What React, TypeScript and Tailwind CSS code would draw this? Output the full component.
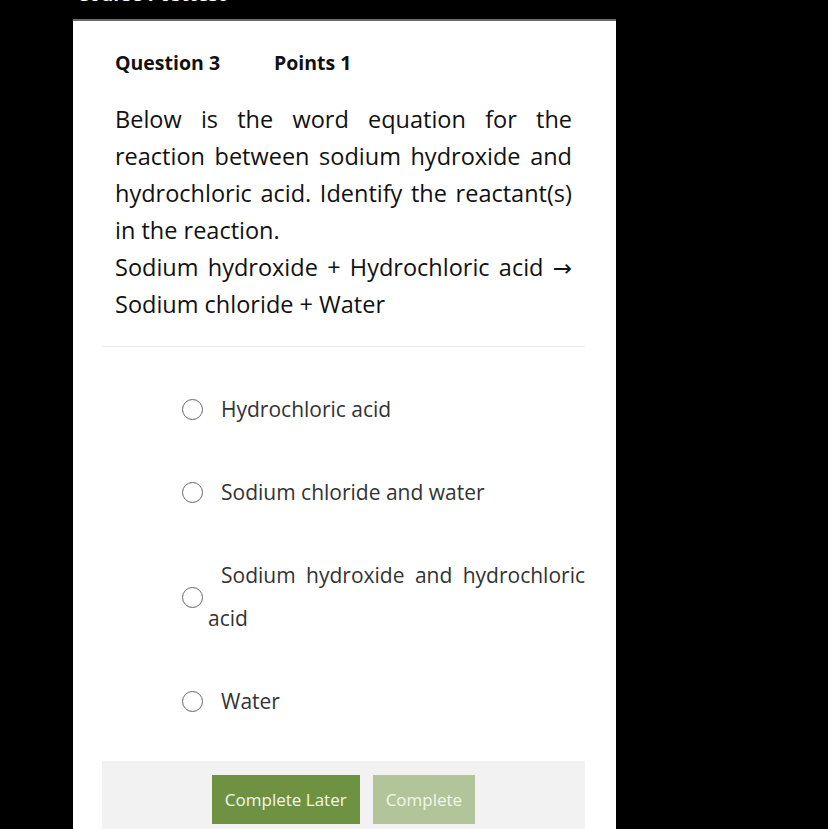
const options = [
  'Hydrochloric acid',
  'Sodium chloride and water',
  'Sodium hydroxide and hydrochloric acid',
  'Water',
];

export default function App() {
  return (
    <div className="min-h-[829px] bg-black" style={{ fontFamily: '"Open Sans", sans-serif' }}>
      <div className="ml-[73px] w-[543px] min-h-[829px] bg-white">
        <div className="h-[21px] overflow-hidden border-b-2 border-[#6b6b6b] bg-black">
          <div className="-mt-[19px] pl-[4px] text-[19px] leading-[26px] font-bold text-white">Course Posttest</div>
        </div>

        <div className="ml-[29px] mr-[31px]">
          <div className="flex px-[13px] pt-[29px] text-[19.5px] leading-[26px] font-bold text-[#111]">
            <span className="w-[159px]">Question 3</span>
            <span>Points 1</span>
          </div>

          <div className="px-[13px] pt-[25px] pb-[23px] text-[23.5px] leading-[37px] text-[#111] text-justify">
            <p>
              Below is the word equation for the reaction between sodium hydroxide and hydrochloric acid.
              Identify the reactant(s) in the reaction.
            </p>
            <p>
              Sodium hydroxide + Hydrochloric acid{' '}
              <span className="font-['DejaVu_Sans',sans-serif] text-[23px] leading-none">→</span> Sodium chloride + Water
            </p>
          </div>

          <div className="border-t border-[#ececec] pt-[21px] pl-[80px] pb-[18px]">
            {options.map((o) => (
              <label key={o} className="flex items-center py-[20px] cursor-pointer">
                <span className="w-[21px] h-[21px] shrink-0 rounded-full border-[1.5px] border-[#666] bg-white" />
                <span className="ml-[5px] flex-1 text-[21px] leading-[43px] text-[#333] text-justify indent-[13px]">{o}</span>
              </label>
            ))}
          </div>

          <div className="flex justify-center gap-[13px] bg-[#f2f2f2] pt-[14px] pb-[10px]">
            <button className="h-[49px] px-[13px] bg-[#6e9242] text-[17px] text-[#f2f7e8]">Complete Later</button>
            <button className="h-[49px] px-[13px] bg-[#b2c49a] text-[17px] text-[#f2f7e8]">Complete</button>
          </div>
        </div>
      </div>
    </div>
  );
}
